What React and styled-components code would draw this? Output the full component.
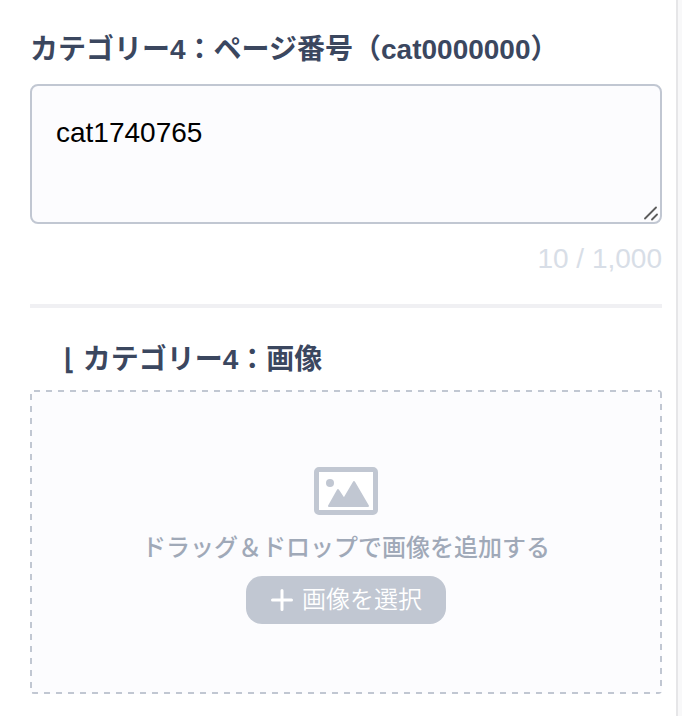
import { useState } from "react";
import styled, { createGlobalStyle } from "styled-components";

const GlobalStyle = createGlobalStyle`
  * {
    box-sizing: border-box;
  }
  body {
    margin: 0;
    background-color: #f8f8f9;
    font-family: "Liberation Sans", "Noto Sans CJK JP", sans-serif;
  }
`;

const Panel = styled.main`
  min-height: 100vh;
  margin-right: 4px;
  padding: 30px 14px 22px 30px;
  background-color: #fff;
  border-right: 2px solid #e6e6e8;
`;

const Field = styled.section`
  display: flex;
  flex-direction: column;
`;

const Label = styled.label`
  margin-bottom: ${(props) => (props.$nested ? "10px" : "14px")};
  padding-left: ${(props) => (props.$nested ? "34px" : "0")};
  color: #3b475f;
  font-size: 28px;
  font-weight: bold;
  line-height: 40px;
  white-space: pre;
`;

const TextBox = styled.div`
  position: relative;
  display: flex;
`;

const TextArea = styled.textarea`
  width: 100%;
  height: 140px;
  padding: 30px 24px;
  background-color: #fcfcfe;
  border: 2px solid #c1c7d2;
  border-radius: 8px;
  color: #000;
  font-family: inherit;
  font-size: 28px;
  line-height: 34px;
  outline: none;
  resize: vertical;
  &::-webkit-resizer {
    display: none;
  }
`;

const Grip = styled.svg`
  position: absolute;
  right: 2px;
  bottom: 2px;
  pointer-events: none;
`;

const Counter = styled.p`
  margin: 16px 0 0;
  color: #d8dee7;
  font-size: 28px;
  line-height: 38px;
  text-align: right;
`;

const Divider = styled.hr`
  height: 4px;
  margin: 26px 0 32px;
  background-color: #f0f0f3;
  border: 0;
`;

const dashX = "repeating-linear-gradient(90deg, #c1c7d2 0 6px, transparent 6px 12px)";
const dashY = "repeating-linear-gradient(180deg, #c1c7d2 0 6px, transparent 6px 12px)";

const DropZone = styled.div`
  display: flex;
  flex-direction: column;
  align-items: center;
  padding: 77px 24px 70px;
  background-color: #fcfcfe;
  background-image: ${dashX}, ${dashX}, ${dashY}, ${dashY};
  background-size: 12px 2px, 12px 2px, 2px 12px, 2px 12px;
  background-position: 4px 0, 2px 100%, 0 4px, 100% 2px;
  background-repeat: repeat-x, repeat-x, repeat-y, repeat-y;
  border-radius: 4px;
`;

const DropText = styled.p`
  margin: 11px 0 10px;
  color: #a0a9b8;
  font-family: "Noto Sans CJK JP", sans-serif;
  font-size: 24px;
  font-weight: 500;
  line-height: 40px;
`;

const SelectButton = styled.button`
  display: flex;
  align-items: center;
  gap: 8px;
  height: 48px;
  padding: 0 24px;
  background-color: #c1c7d2;
  border: 0;
  border-radius: 16px;
  color: #fff;
  font-family: "Noto Sans CJK JP", sans-serif;
  font-size: 24px;
  font-weight: 350;
  line-height: 40px;
  cursor: pointer;
`;

const ButtonText = styled.span`
  padding-bottom: 4px;
`;

function PictureIcon() {
  return (
    <svg width="64" height="48" viewBox="0 0 64 48" aria-hidden="true">
      <rect x="2.5" y="2.5" width="59" height="43" rx="2.5" fill="#fff" stroke="#c1c7d2" strokeWidth="5" />
      <circle cx="16" cy="16" r="4" fill="#c1c7d2" />
      <path
        d="M15 39 L24 23 L30 32 L40 15 L54 39 Z"
        fill="#c1c7d2"
        stroke="#c1c7d2"
        strokeWidth="2"
        strokeLinejoin="round"
      />
    </svg>
  );
}

function PlusIcon() {
  return (
    <svg width="24" height="24" viewBox="0 0 24 24" aria-hidden="true">
      <path d="M12 2.5v19M2.5 12h19" stroke="#fff" strokeWidth="3" strokeLinecap="round" />
    </svg>
  );
}

export default function App() {
  const [pageId, setPageId] = useState("cat1740765");

  return (
    <>
      <GlobalStyle />
      <Panel>
        <Field>
          <Label htmlFor="page-id">カテゴリー4：ページ番号（cat0000000）</Label>
          <TextBox>
            <TextArea
              id="page-id"
              maxLength={1000}
              spellCheck={false}
              value={pageId}
              onChange={(e) => setPageId(e.target.value)}
            />
            <Grip width="16" height="16" viewBox="0 0 16 16" aria-hidden="true">
              <path d="M1 12.5 L12 1.5 M8 13.5 L13 8.5" stroke="#5c5c5c" strokeWidth="1.8" strokeLinecap="round" />
            </Grip>
          </TextBox>
          <Counter>{pageId.length} / 1,000</Counter>
        </Field>
        <Divider />
        <Field>
          <Label as="div" id="image-label" $nested>
            ⌊ カテゴリー4：画像
          </Label>
          <DropZone role="group" aria-labelledby="image-label">
            <PictureIcon />
            <DropText>ドラッグ＆ドロップで画像を追加する</DropText>
            <SelectButton type="button">
              <PlusIcon />
              <ButtonText>画像を選択</ButtonText>
            </SelectButton>
          </DropZone>
        </Field>
      </Panel>
    </>
  );
}
